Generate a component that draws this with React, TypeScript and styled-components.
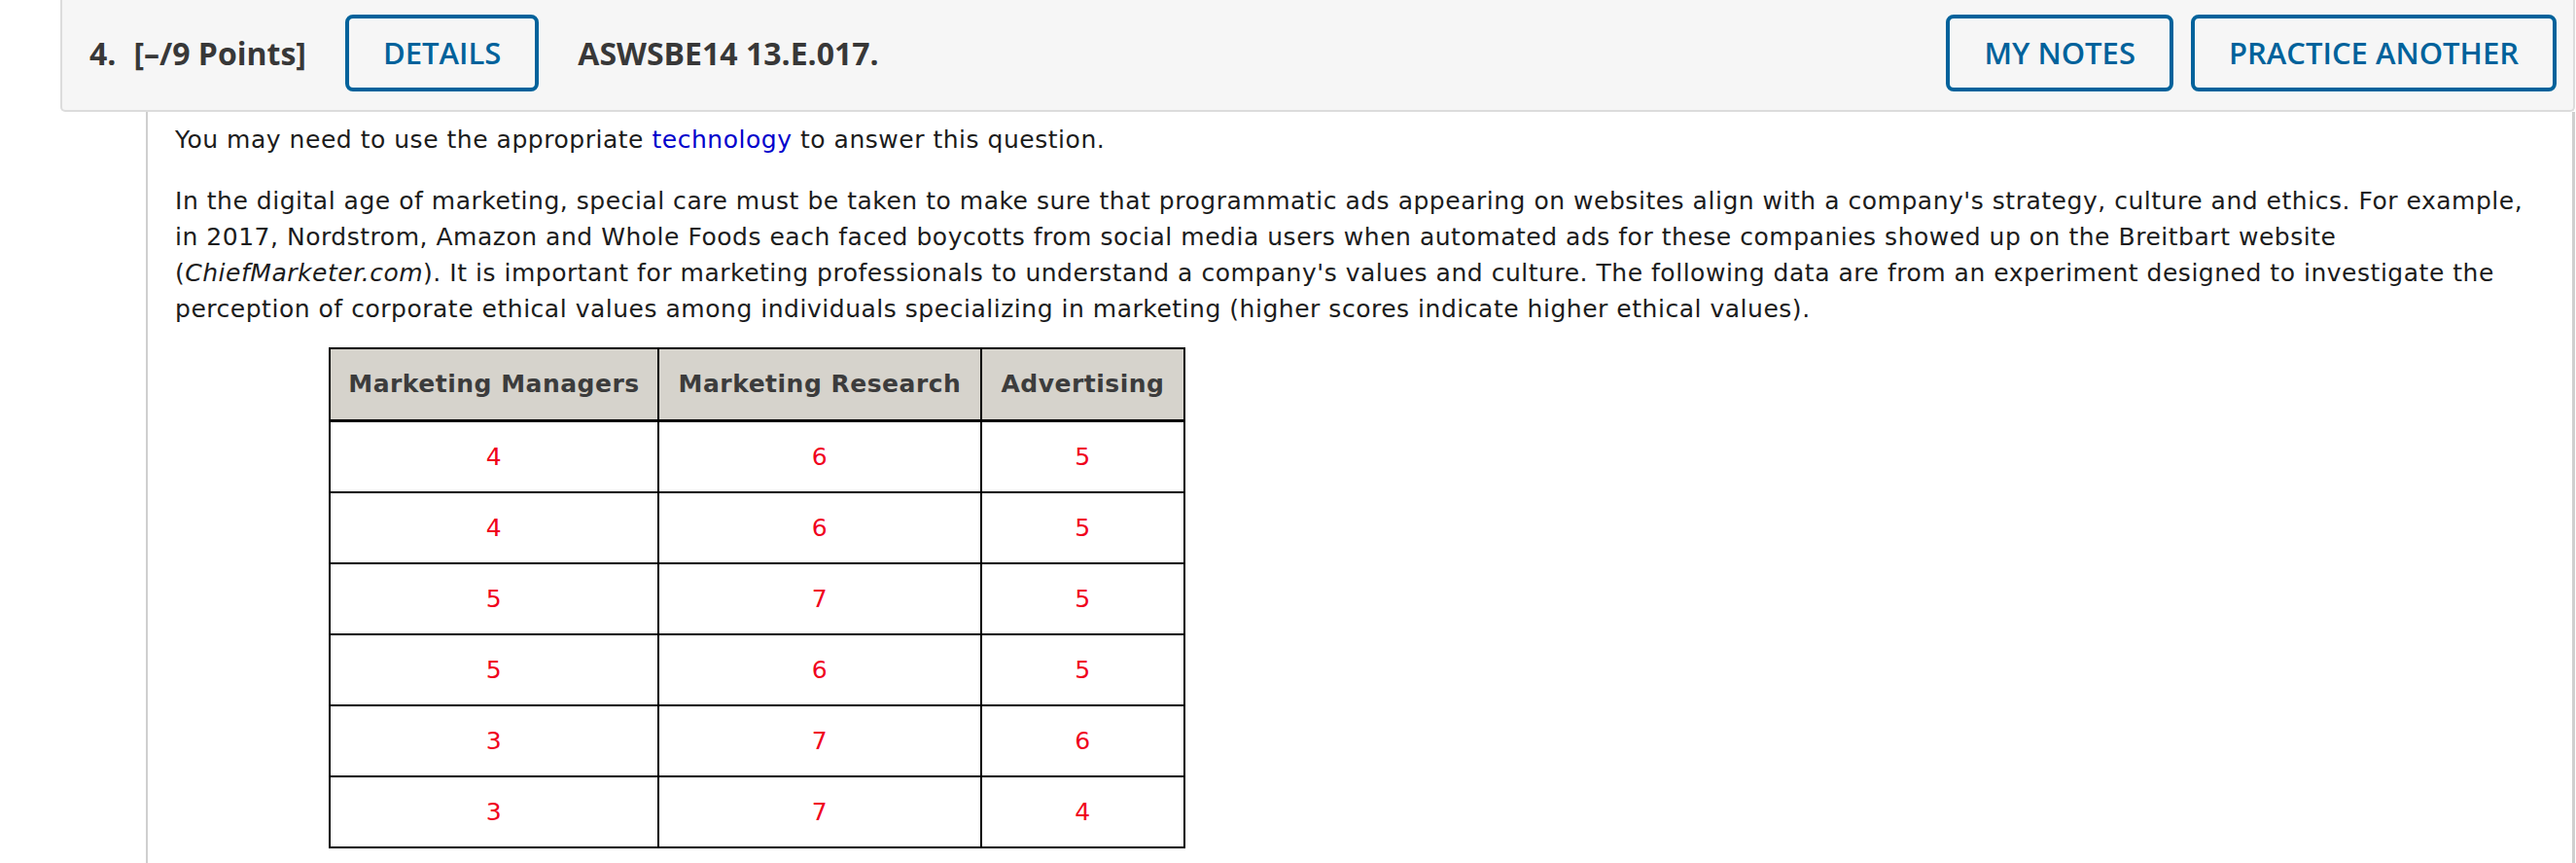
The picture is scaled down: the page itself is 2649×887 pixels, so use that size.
import React from "react";
import styled, { createGlobalStyle } from "styled-components";

const GlobalStyle = createGlobalStyle`
  html, body {
    margin: 0;
    padding: 0;
    background: #ffffff;
    overflow: hidden;
  }
`;

const Question = styled.div`
  margin-left: 62px;
  width: 2586px;
`;

const Header = styled.header`
  height: 115px;
  box-sizing: border-box;
  display: flex;
  align-items: center;
  padding: 0 17px 5px 28px;
  background-color: #f6f6f6;
  border: 2px solid #dcdcdc;
  border-top: none;
  border-radius: 0 0 5px 5px;
  font-family: "Open Sans", "Liberation Sans", sans-serif;
  color: #383838;
`;

const Number = styled.span`
  font-size: 32px;
  font-weight: 700;
  margin-right: 18px;
`;

const Points = styled.span`
  font-size: 32px;
  font-weight: 700;
  margin-right: 40px;
`;

const Title = styled.span`
  font-size: 32px;
  font-weight: 700;
  margin-left: 40px;
`;

const Spacer = styled.div`
  flex: 1;
`;

const OutlineButton = styled.button<{ $gap?: number }>`
  height: 79px;
  box-sizing: border-box;
  padding: 0 35px;
  margin-left: ${(p) => p.$gap ?? 0}px;
  background: transparent;
  border: 4px solid #00629b;
  border-radius: 8px;
  color: #00629b;
  font-family: "Open Sans", "Liberation Sans", sans-serif;
  font-size: 31px;
  font-weight: 600;
  cursor: pointer;
`;

const Body = styled.div`
  margin-left: 88px;
  min-height: 800px;
  box-sizing: border-box;
  border-left: 2px solid #cfcfcf;
  border-right: 3px solid #cfcfcf;
  padding: 10px 20px 0 28px;
  font-family: Verdana, "DejaVu Sans", sans-serif;
  font-size: 25px;
  letter-spacing: 0.52px;
  line-height: 37px;
  color: #1c1c1c;
`;

const Para = styled.p<{ $top?: number }>`
  margin: ${(p) => p.$top ?? 0}px 0 0 0;
`;

const Link = styled.a`
  color: #0000cc;
  text-decoration: none;
`;

const DataTable = styled.table`
  margin: 21px 0 0 158px;
  border-collapse: collapse;
  border: 2px solid #000;
  font-family: Verdana, "DejaVu Sans", sans-serif;
  font-size: 25px;
  letter-spacing: 0.5px;
`;

const HeadCell = styled.th<{ $w: number }>`
  width: ${(p) => p.$w}px;
  height: 74px;
  box-sizing: border-box;
  padding: 0 14px;
  background-color: #d6d3cc;
  border: 2px solid #000;
  border-bottom-width: 3px;
  color: #3c3c3c;
  font-weight: 700;
  text-align: center;
  white-space: nowrap;
`;

const ValueCell = styled.td`
  height: 71px;
  padding: 0;
  border: 2px solid #000;
  color: #f0001c;
  text-align: center;
`;

const columns = [
  { label: "Marketing Managers", width: 338 },
  { label: "Marketing Research", width: 332 },
  { label: "Advertising", width: 209 },
];

const rows = [
  [4, 6, 5],
  [4, 6, 5],
  [5, 7, 5],
  [5, 6, 5],
  [3, 7, 6],
  [3, 7, 4],
];

export default function App() {
  return (
    <>
      <GlobalStyle />
      <Question>
        <Header>
          <Number>4.</Number>
          <Points>[–/9 Points]</Points>
          <OutlineButton>DETAILS</OutlineButton>
          <Title>ASWSBE14 13.E.017.</Title>
          <Spacer />
          <OutlineButton>MY NOTES</OutlineButton>
          <OutlineButton $gap={18}>PRACTICE ANOTHER</OutlineButton>
        </Header>
        <Body>
          <Para>
            You may need to use the appropriate <Link href="#">technology</Link> to answer this question.
          </Para>
          <Para $top={26}>
            In the digital age of marketing, special care must be taken to make sure that programmatic ads appearing on
            websites align with a company's strategy, culture and ethics. For example,
            <br />
            in 2017, Nordstrom, Amazon and Whole Foods each faced boycotts from social media users when automated ads for
            these companies showed up on the Breitbart website
            <br />
            (<i>ChiefMarketer.com</i>). It is important for marketing professionals to understand a company's values and
            culture. The following data are from an experiment designed to investigate the
            <br />
            perception of corporate ethical values among individuals specializing in marketing (higher scores indicate
            higher ethical values).
          </Para>
          <DataTable>
            <thead>
              <tr>
                {columns.map((c) => (
                  <HeadCell key={c.label} $w={c.width}>
                    {c.label}
                  </HeadCell>
                ))}
              </tr>
            </thead>
            <tbody>
              {rows.map((r, i) => (
                <tr key={i}>
                  {r.map((v, j) => (
                    <ValueCell key={j}>{v}</ValueCell>
                  ))}
                </tr>
              ))}
            </tbody>
          </DataTable>
        </Body>
      </Question>
    </>
  );
}
